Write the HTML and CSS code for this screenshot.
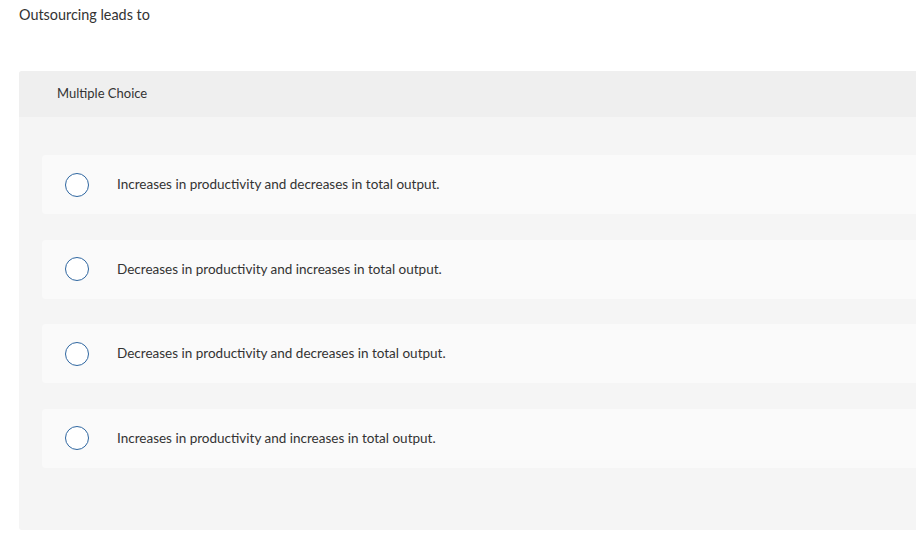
FILE: index.html
```html
<!DOCTYPE html>
<html lang="en">
<head>
    <meta charset="UTF-8">
    <meta name="viewport" content="width=device-width, initial-scale=1.0">
    <title>Question</title>
    <link rel="stylesheet" href="styles.css">
</head>
<body>

    <div class="page">
        <!-- Question prompt -->
        <p class="prompt">Outsourcing leads to</p>

        <div class="question">
            <div class="question-type">Multiple Choice</div>

            <!-- Answer choices -->
            <div class="choices">
                <label class="choice">
                    <span class="radio"></span>
                    <span class="choice-text">Increases in productivity and decreases in total output.</span>
                </label>
                <label class="choice">
                    <span class="radio"></span>
                    <span class="choice-text">Decreases in productivity and increases in total output.</span>
                </label>
                <label class="choice">
                    <span class="radio"></span>
                    <span class="choice-text">Decreases in productivity and decreases in total output.</span>
                </label>
                <label class="choice">
                    <span class="radio"></span>
                    <span class="choice-text">Increases in productivity and increases in total output.</span>
                </label>
            </div>
        </div>
    </div>

</body>
</html>
```

FILE: styles.css
```css
body {
    margin: 0;
    background-color: #ffffff;
    font-family: Lato, "Open Sans", sans-serif;
    color: #333333;
    overflow: hidden;
}

.page {
    padding-left: 19px;
    width: 920px;
}

.prompt {
    margin: 0;
    padding-top: 6px;
    height: 65px;
    font-size: 14.4px;
    line-height: 17px;
}

.question {
    background-color: #f5f5f5;
    border-radius: 3px;
    padding-bottom: 62px;
}

.question-type {
    background-color: #efefef;
    border-radius: 3px 3px 0 0;
    height: 46px;
    line-height: 45px;
    padding-left: 38px;
    font-size: 13px;
}

.choices {
    display: flex;
    flex-direction: column;
    gap: 25.3px;
    padding: 38px 0 0 23px;
}

.choice {
    display: flex;
    align-items: center;
    height: 59.3px;
    background-color: #fafafa;
    border-radius: 4px;
    padding-left: 23px;
    cursor: pointer;
}

.radio {
    width: 22px;
    height: 22px;
    border: 1.5px solid #2e66a0;
    border-radius: 50%;
    background-color: #ffffff;
    flex-shrink: 0;
}

.choice-text {
    margin-left: 28px;
    font-size: 13.5px;
    padding-bottom: 1px;
}
```
